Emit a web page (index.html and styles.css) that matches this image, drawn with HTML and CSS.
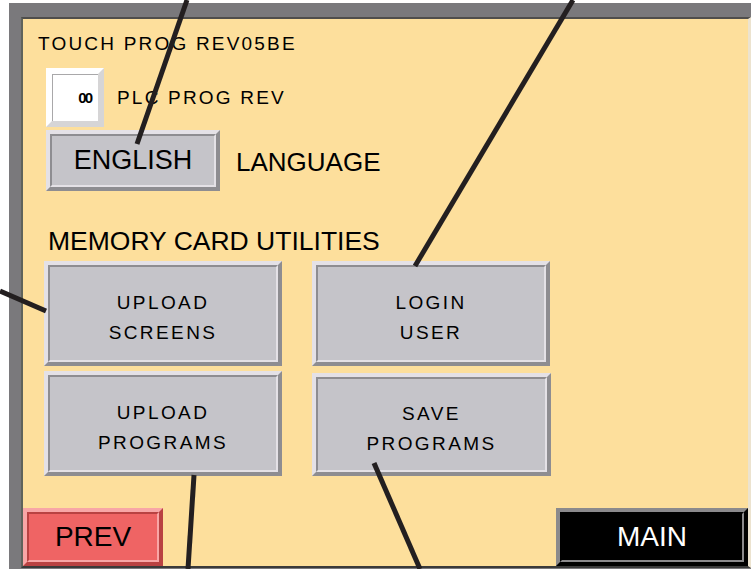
FILE: index.html
```html
<!DOCTYPE html>
<html lang="en">
<head>
    <meta charset="UTF-8">
    <title>Touch Setup Screen</title>
    <link rel="stylesheet" href="styles.css">
</head>
<body>

<div class="frame">
    <div class="panel">
        <div class="title">TOUCH PROG REV05BE</div>

        <div class="rev-row">
            <div class="rev-box"><span class="rev-value">00</span></div>
            <span class="small-label">PLC PROG REV</span>
        </div>

        <div class="lang-row">
            <button class="btn lang-btn"><span class="btn-face">ENGLISH</span></button>
            <span class="big-label">LANGUAGE</span>
        </div>

        <div class="section-title">MEMORY CARD UTILITIES</div>

        <div class="util-grid">
            <button class="btn util-btn"><span class="btn-face">UPLOAD<br>SCREENS</span></button>
            <button class="btn util-btn"><span class="btn-face">LOGIN<br>USER</span></button>
            <button class="btn util-btn"><span class="btn-face">UPLOAD<br>PROGRAMS</span></button>
            <button class="btn util-btn save-btn"><span class="btn-face">SAVE<br>PROGRAMS</span></button>
        </div>

        <div class="footer">
            <button class="btn nav-btn prev-btn"><span class="btn-face">PREV</span></button>
            <button class="btn nav-btn main-btn"><span class="btn-face">MAIN</span></button>
        </div>
    </div>
</div>

<!-- callout leader lines drawn over the screen -->
<svg class="leaders" width="751" height="569" viewBox="0 0 751 569">
    <line x1="187" y1="0" x2="137" y2="144"/>
    <line x1="573" y1="0" x2="415" y2="266"/>
    <line x1="0" y1="291" x2="46" y2="311"/>
    <line x1="194" y1="475" x2="188" y2="569"/>
    <line x1="374" y1="463" x2="420" y2="569"/>
</svg>

</body>
</html>
```
FILE: styles.css
```css
:root {
    --panel: #fddf9c;
    --frame: #7a797c;
    --btn-face: #c5c4c9;
    --btn-light: #e4e1e6;
    --btn-dark: #8e8d91;
    --red-face: #ef6464;
    --red-light: #f8a6a6;
    --red-dark: #b94242;
    --ink: #000000;
}

body {
    margin: 0;
    background: #ffffff;
    font-family: "Liberation Sans", Arial, sans-serif;
    color: var(--ink);
    position: relative;
    width: 751px;
    height: 569px;
    overflow: hidden;
}

.frame {
    margin: 3px 0 0 9px;
    height: 566px;
    box-sizing: border-box;
    padding: 14px 0 0 12px;
    background: var(--frame);
}

.panel {
    height: 547px;
    border-style: solid;
    border-width: 2px 3px 2px 2px;
    border-color: #4f4e4c #ece3cf #3a3a3a #5f635b;
    background: var(--panel);
    display: flex;
    flex-direction: column;
}

.title {
    margin: 15px 0 0 15px;
    font-size: 19px;
    line-height: 20px;
    letter-spacing: 2.2px;
}

.small-label {
    font-size: 19px;
    letter-spacing: 2.2px;
}

.big-label {
    font-size: 26px;
    margin-top: 4px;
}

/* PLC revision */
.rev-row {
    display: flex;
    align-items: center;
    gap: 13px;
    margin: 14px 0 0 23px;
}

.rev-box {
    width: 58px;
    height: 59px;
    box-sizing: border-box;
    border: 6px solid;
    border-color: #ffffff #d6d5d6 #d6d5d6 #ffffff;
    background: #ffffff;
    display: flex;
    align-items: center;
    justify-content: flex-end;
    padding-right: 7px;
    box-shadow: inset 1px 1px 0 #a9a8aa;
}

.rev-value {
    font-size: 15px;
    font-weight: bold;
    letter-spacing: -2px;
}

/* bevelled buttons */
.btn {
    box-sizing: border-box;
    display: flex;
    padding: 0;
    border: 4px solid;
    border-color: var(--btn-light) var(--btn-dark) var(--btn-dark) var(--btn-light);
    background: var(--btn-face);
    font: inherit;
    color: inherit;
    cursor: pointer;
}

.btn-face {
    flex: 1;
    display: flex;
    align-items: center;
    justify-content: center;
    border: 2px solid;
    border-color: var(--btn-dark) var(--btn-light) var(--btn-light) var(--btn-dark);
}

.lang-row {
    display: flex;
    align-items: center;
    gap: 16px;
    margin: 3px 0 0 23px;
}

.lang-btn {
    width: 174px;
    height: 61px;
    font-size: 27px;
}

.section-title {
    margin: 35px 0 0 25px;
    font-size: 26.5px;
    line-height: 30px;
}

.util-grid {
    display: grid;
    grid-template-columns: 238px 238px;
    grid-auto-rows: 105px;
    column-gap: 30px;
    row-gap: 5px;
    margin: 5px 0 0 21px;
}

.util-btn {
    font-size: 19px;
    letter-spacing: 2.4px;
    line-height: 30px;
}

.util-btn .btn-face {
    padding-top: 8px;
}

.save-btn {
    margin-top: 2px;
    width: 239px;
}

.footer {
    margin-top: auto;
    display: flex;
    justify-content: space-between;
    align-items: flex-end;
}

.nav-btn {
    height: 58px;
    font-size: 28px;
}

.prev-btn {
    width: 140px;
    background: var(--red-face);
    border-color: var(--red-light) var(--red-dark) var(--red-dark) var(--red-light);
}

.prev-btn .btn-face {
    border-color: var(--red-dark) var(--red-light) var(--red-light) var(--red-dark);
}

.main-btn {
    width: 192px;
    background: #000000;
    color: #ffffff;
    border-color: #8b8a8c #000000 #000000 #8b8a8c;
}

.main-btn .btn-face {
    border-color: #000000 #8b8a8c #8b8a8c #000000;
}

.leaders {
    position: absolute;
    top: 0;
    left: 0;
    pointer-events: none;
}

.leaders line {
    stroke: #231f20;
    stroke-width: 5;
}
```
